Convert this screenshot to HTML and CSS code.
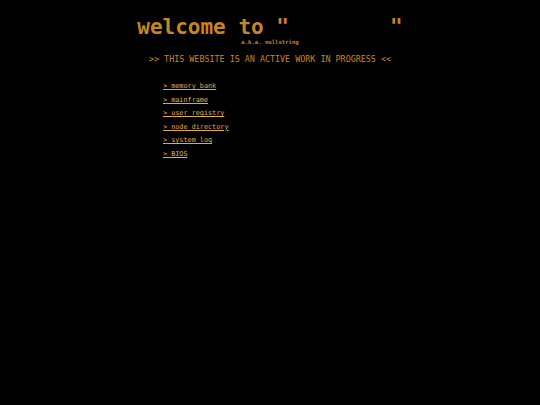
FILE: index.html
```html
<!DOCTYPE html>
<html>
<head>
<meta charset="utf-8">
<link rel="stylesheet" href="styles.css">
</head>
<body>
<div class="page">
  <header class="head">
    <h1 class="title">welcome to "        "</h1>
    <div class="aka">a.k.a. nullstring</div>
  </header>
  <p class="banner">&gt;&gt; THIS WEBSITE IS AN ACTIVE WORK IN PROGRESS &lt;&lt;</p>
  <nav class="menu">
    <a href="#">&gt; memory bank</a>
    <a href="#">&gt; mainframe</a>
    <a href="#">&gt; user registry</a>
    <a href="#">&gt; node directory</a>
    <a href="#">&gt; system log</a>
    <a href="#">&gt; BIOS</a>
  </nav>
</div>
</body>
</html>
```
FILE: styles.css
```css
html, body {
  margin: 0;
  padding: 0;
  background: #000;
}
body {
  font-family: "DejaVu Sans Mono", monospace;
  color: #c8861e;
}
.page {
  width: 540px;
  display: flex;
  flex-direction: column;
  align-items: center;
}
.head {
  margin-top: 14px;
  display: flex;
  flex-direction: column;
  align-items: center;
}
.title {
  margin: 0;
  font-size: 21px;
  line-height: 26px;
  font-weight: bold;
  white-space: pre;
}
.aka {
  font-size: 5.6px;
  line-height: 7px;
  font-weight: bold;
  margin-top: -1px;
}
.banner {
  margin: 7px 0 0;
  font-size: 8.4px;
  line-height: 12px;
}
.menu {
  align-self: flex-start;
  margin-left: 163px;
  margin-top: 15px;
  display: flex;
  flex-direction: column;
}
.menu a {
  font-size: 6.8px;
  line-height: 13.6px;
  color: #e0ac48;
  text-decoration: underline;
}
```
